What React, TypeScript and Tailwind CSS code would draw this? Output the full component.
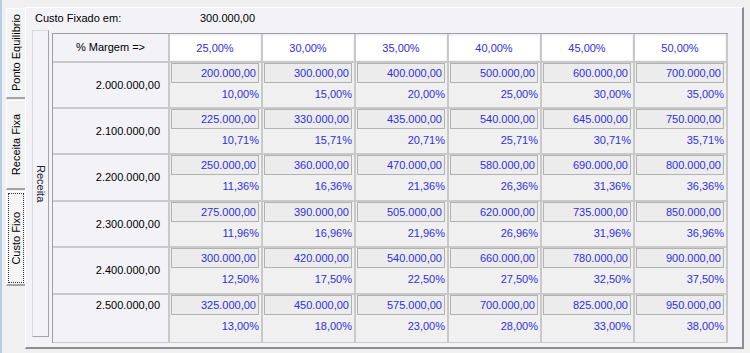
const margens = ["25,00%", "30,00%", "35,00%", "40,00%", "45,00%", "50,00%"];

// cada linha: receita, valores do lucro e percentuais sobre a receita
const linhas = [
  {
    receita: "2.000.000,00",
    valores: ["200.000,00", "300.000,00", "400.000,00", "500.000,00", "600.000,00", "700.000,00"],
    percentuais: ["10,00%", "15,00%", "20,00%", "25,00%", "30,00%", "35,00%"],
  },
  {
    receita: "2.100.000,00",
    valores: ["225.000,00", "330.000,00", "435.000,00", "540.000,00", "645.000,00", "750.000,00"],
    percentuais: ["10,71%", "15,71%", "20,71%", "25,71%", "30,71%", "35,71%"],
  },
  {
    receita: "2.200.000,00",
    valores: ["250.000,00", "360.000,00", "470.000,00", "580.000,00", "690.000,00", "800.000,00"],
    percentuais: ["11,36%", "16,36%", "21,36%", "26,36%", "31,36%", "36,36%"],
  },
  {
    receita: "2.300.000,00",
    valores: ["275.000,00", "390.000,00", "505.000,00", "620.000,00", "735.000,00", "850.000,00"],
    percentuais: ["11,96%", "16,96%", "21,96%", "26,96%", "31,96%", "36,96%"],
  },
  {
    receita: "2.400.000,00",
    valores: ["300.000,00", "420.000,00", "540.000,00", "660.000,00", "780.000,00", "900.000,00"],
    percentuais: ["12,50%", "17,50%", "22,50%", "27,50%", "32,50%", "37,50%"],
  },
  {
    receita: "2.500.000,00",
    valores: ["325.000,00", "450.000,00", "575.000,00", "700.000,00", "825.000,00", "950.000,00"],
    percentuais: ["13,00%", "18,00%", "23,00%", "28,00%", "33,00%", "38,00%"],
  },
];

function Aba({ titulo, altura, ativa }: { titulo: string; altura: string; ativa?: boolean }) {
  return (
    <div
      className={`${altura} w-[19px] border-l border-t border-white border-b-2 border-b-[#a3a3a3] ${
        ativa ? "bg-[#f5f5f5] p-[1px]" : "bg-[#f3f3f3]"
      }`}
    >
      <div
        className={`flex h-full w-full items-center justify-center ${ativa ? "border border-dotted border-[#333]" : ""}`}
      >
        <span className="rotate-180 [writing-mode:vertical-rl] leading-[13px] text-black">{titulo}</span>
      </div>
    </div>
  );
}

export default function App() {
  return (
    <div className="flex h-[353px] w-[750px] overflow-hidden bg-[#f0f0f0] font-['Liberation_Sans',Arial,sans-serif] text-[11px] leading-[13px]">
      <div className="w-[2px] shrink-0 bg-[#b5cfe9]" />

      {/* abas verticais */}
      <div className="flex w-[23px] shrink-0 flex-col gap-[1px] pl-[4px] pt-[8px]">
        <Aba titulo="Ponto Equilibrio" altura="h-[91px]" />
        <Aba titulo="Receita Fixa" altura="h-[90px]" />
        <Aba titulo="Custo Fixo" altura="h-[95px]" ativa />
      </div>

      <div className="flex-1 pb-[4px] pr-[6px] pt-[7px]">
        <div className="h-full border-l border-t border-white border-b-2 border-r-2 border-b-[#8e8e8e] border-r-[#8e8e8e] bg-[#f2f2f7] pl-[6px] pt-[4px]">
          <div className="flex pl-[3px] text-black">
            <span className="w-[165px]">Custo Fixado em:</span>
            <span>300.000,00</span>
          </div>

          <div className="mt-[5px] flex gap-[3px]">
            <div className="flex h-[307px] w-[17px] items-center justify-center border-l border-t border-[#dcdcdc] border-b-[#a5a5a5] border-r-[#a5a5a5] border-b border-r">
              <span className="[writing-mode:vertical-rl] text-[#1c1c40]">Receita</span>
            </div>

            <div className="mt-[3px] border-l border-t border-[#9f9f9f] bg-[#c9c9c9] pb-[1px] pr-[2px]">
              <div className="grid grid-cols-[115px_repeat(6,91px)] grid-rows-[27px_44px_44px_45px_44px_45px_47px] gap-[2px]">
                <div className="flex items-center justify-center bg-[#f2f2f7] text-black">% Margem =&gt;</div>
                {margens.map((m) => (
                  <div key={m} className="bg-[#f2f2f7] pb-[1px] pr-[1px] pt-[2px]">
                    <div className="flex h-full items-center justify-center bg-white text-[#2f2fe0]">{m}</div>
                  </div>
                ))}

                {linhas.map((l, i) => (
                  <div key={l.receita} className="contents">
                    <div
                      className={`flex justify-end bg-[#f2f2f7] pr-[8px] text-black ${
                        i === linhas.length - 1 ? "items-start pt-[4px]" : "items-center"
                      }`}
                    >
                      {l.receita}
                    </div>
                    {l.valores.map((v, j) => (
                      <div key={v} className="bg-[#f0f0f0] pl-[1px] pr-[2px]">
                        <div className="flex h-[20px] items-center justify-end border border-[#b2b2b2] bg-[#ececec] pr-[2px] text-[#2f2fe0]">
                          {v}
                        </div>
                        <div className="mt-[5px] text-right text-[#2f2fe0]">{l.percentuais[j]}</div>
                      </div>
                    ))}
                  </div>
                ))}
              </div>
            </div>
          </div>
        </div>
      </div>
    </div>
  );
}
